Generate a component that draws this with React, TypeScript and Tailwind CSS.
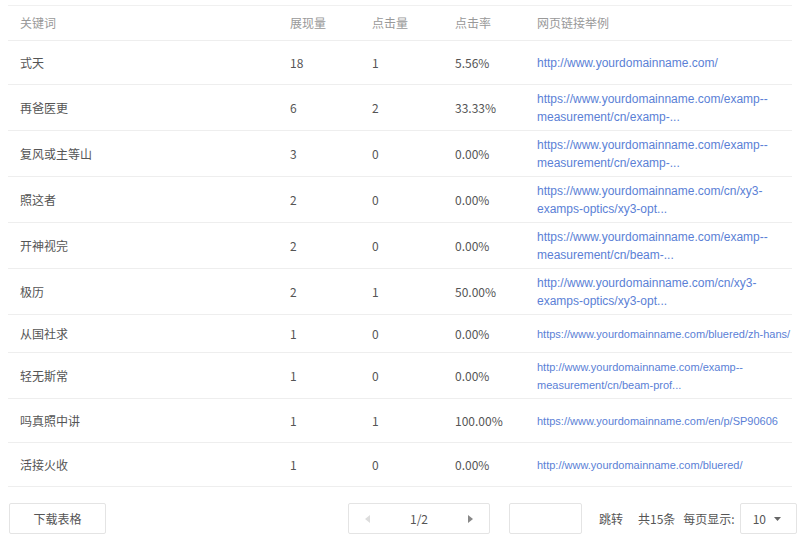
import React from "react";

const rows: [string, string, string, string, string[], boolean][] = [
  ["式天", "18", "1", "5.56%", ["http://www.yourdomainname.com/"], false],
  ["再爸医更", "6", "2", "33.33%", ["https://www.yourdomainname.com/examp--", "measurement/cn/examp-..."], false],
  ["复风或主等山", "3", "0", "0.00%", ["https://www.yourdomainname.com/examp--", "measurement/cn/examp-..."], false],
  ["照这者", "2", "0", "0.00%", ["https://www.yourdomainname.com/cn/xy3-", "examps-optics/xy3-opt..."], false],
  ["开神视完", "2", "0", "0.00%", ["https://www.yourdomainname.com/examp--", "measurement/cn/beam-..."], false],
  ["极历", "2", "1", "50.00%", ["http://www.yourdomainname.com/cn/xy3-", "examps-optics/xy3-opt..."], false],
  ["从国社求", "1", "0", "0.00%", ["https://www.yourdomainname.com/bluered/zh-hans/"], true],
  ["轻无斯常", "1", "0", "0.00%", ["http://www.yourdomainname.com/examp--", "measurement/cn/beam-prof..."], true],
  ["吗真照中讲", "1", "1", "100.00%", ["https://www.yourdomainname.com/en/p/SP90606"], true],
  ["活接火收", "1", "0", "0.00%", ["http://www.yourdomainname.com/bluered/"], true],
];

const font = { fontFamily: '"Noto Sans CJK SC", "Liberation Sans", sans-serif' };

export default function App() {
  return (
    <div className="w-[800px] h-[541px] bg-white text-[#555] text-[12px] overflow-hidden whitespace-nowrap" style={font}>
      <div className="mx-[8px] mt-[5px] border-t border-[#f0f0f0]">
        <div className="flex items-center h-[35px] border-b border-[#eee] text-[#999]">
          <div className="w-[282px] pl-[12px]">关键词</div>
          <div className="w-[82px]">展现量</div>
          <div className="w-[83px]">点击量</div>
          <div className="w-[82px]">点击率</div>
          <div>网页链接举例</div>
        </div>
        {rows.map((r, i) => (
          <div key={i} className={`flex items-center border-b border-[#eee] ${r[4].length > 1 ? "h-[46px]" : i === 6 ? "h-[38px]" : "h-[44px]"}`}>
            <div className="w-[282px] pl-[12px] text-[12px]">{r[0]}</div>
            <div className="w-[82px]">{r[1]}</div>
            <div className="w-[83px]">{r[2]}</div>
            <div className="w-[82px]">{r[3]}</div>
            <div className={`text-[#5b7fd6] leading-[18px] ${r[5] ? "text-[11px]" : "text-[12px]"}`} style={{ fontFamily: '"Liberation Sans", sans-serif' }}>
              {r[4].map((l, j) => <div key={j}>{l}</div>)}
            </div>
          </div>
        ))}
      </div>
      <div className="flex items-center mt-[16px] px-[9px]">
        <div className="shrink-0 w-[97px] h-[31px] border border-[#e4e4e4] rounded-[2px] flex items-center justify-center">下载表格</div>
        <div className="shrink-0 ml-[242px] w-[142px] h-[31px] border border-[#e4e4e4] rounded-[2px] flex items-center justify-between px-[16px]">
          <svg width="5" height="8" viewBox="0 0 5 8"><path d="M5 0L0 4l5 4z" fill="#ddd" /></svg>
          <span>1/2</span>
          <svg width="5" height="8" viewBox="0 0 5 8"><path d="M0 0l5 4-5 4z" fill="#888" /></svg>
        </div>
        <div className="shrink-0 ml-[19px] w-[73px] h-[31px] border border-[#e4e4e4] rounded-[2px]" />
        <div className="shrink-0 ml-[17px]">跳转</div>
        <div className="shrink-0 ml-[15px]">共15条</div>
        <div className="shrink-0 ml-[8px]">每页显示:</div>
        <div className="shrink-0 ml-[5px] w-[57px] h-[31px] border border-[#e4e4e4] rounded-[2px] flex items-center pl-[12px] gap-[8px]">
          <span>10</span>
          <svg width="7" height="4" viewBox="0 0 7 4"><path d="M0 0h7L3.5 4z" fill="#666" /></svg>
        </div>
      </div>
    </div>
  );
}
